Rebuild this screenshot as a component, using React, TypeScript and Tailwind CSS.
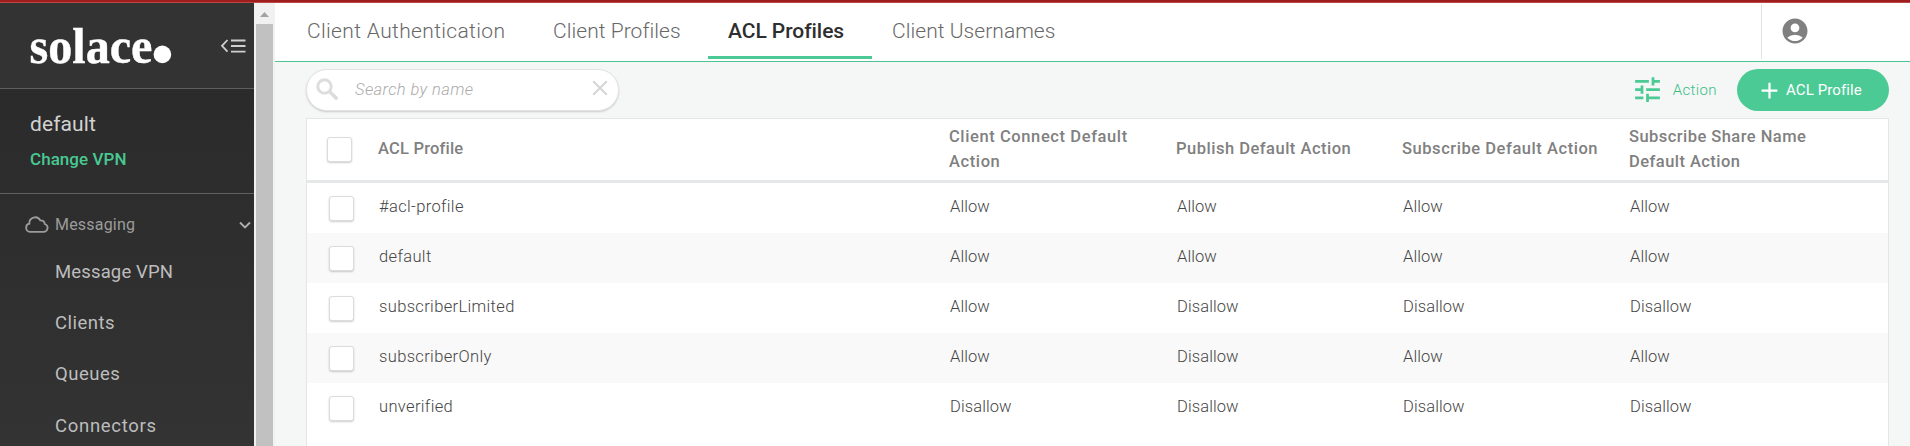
import { MdAccountCircle, MdAdd, MdClose, MdTune } from "react-icons/md";

const tabs = [
  { label: "Client Authentication", box: "w-[197px] tracking-[0.35px]", gap: "ml-[32px]" },
  { label: "Client Profiles", box: "w-[127px] tracking-[0.05px]", gap: "ml-[49px]" },
  { label: "ACL Profiles", box: "w-[164px] tracking-[-0.05px]", gap: "ml-[28px]", active: true },
  { label: "Client Usernames", box: "w-[165px] tracking-[0.05px]", gap: "ml-[20px]" },
];

const links = [
  { label: "Message VPN", cls: "tracking-[0.15px]" },
  { label: "Clients", cls: "tracking-[0.5px]" },
  { label: "Queues", cls: "tracking-[0.5px]" },
  { label: "Connectors", cls: "tracking-[0.7px]" },
];

const rows = [
  ["#acl-profile", "Allow", "Allow", "Allow", "Allow"],
  ["default", "Allow", "Allow", "Allow", "Allow"],
  ["subscriberLimited", "Allow", "Disallow", "Disallow", "Disallow"],
  ["subscriberOnly", "Allow", "Disallow", "Allow", "Allow"],
  ["unverified", "Disallow", "Disallow", "Disallow", "Disallow"],
];

const columns = "grid grid-cols-[71px_571px_227px_226px_227px_1fr]";

function Checkbox() {
  return <span className="block size-[25px] rounded-[3px] border border-[#dcdcdc] bg-white shadow-[0_1px_2px_rgba(0,0,0,0.2)]" />;
}

function Sidebar() {
  return (
    <aside className="flex w-[254px] shrink-0 flex-col overflow-hidden bg-linear-to-b from-[#292929] to-[#333333]">
      <div className="flex h-[86px] shrink-0 items-start border-b border-[#5e5e5e] bg-[#333333] pl-[29px]">
        <svg width="144" height="60" viewBox="0 -7 144 60" className="mt-[12px]">
          <text x="0.5" y="40.500" textLength="123" lengthAdjust="spacingAndGlyphs" fill="#fff" stroke="#fff" strokeWidth="0.4" fontFamily="'Liberation Serif', serif" fontWeight="700" fontSize="51">solace</text>
          <circle cx="133.4" cy="32.4" r="8.8" fill="#fff" />
        </svg>
        <svg width="26" height="16" viewBox="0 0 26 16" className="mt-[35px] ml-[47px]" fill="none" stroke="#cfcfcf" strokeWidth="1.8">
          <path d="M7.5 2L2 7.800l5.500 5.800M11 2.500h14.500M11 8h14.500M11 13.600h14.500" />
        </svg>
      </div>
      <div className="h-[105px] shrink-0 border-b border-[#606060] pt-[20px] pl-[30px]">
        <div className="text-[21px] leading-[30px] tracking-[0.1px] text-[#d2d2d2]">default</div>
        <div className="mt-[8px] text-[17px] leading-[24px] font-medium tracking-[0.05px] text-[#48c993]">Change VPN</div>
      </div>
      <div className="flex h-[61px] shrink-0 items-center pr-[3px] pl-[25px] text-[#9c9c9c]">
        <svg width="24" height="17" viewBox="0 0 24 17" fill="none" stroke="currentColor" strokeWidth="1.8">
          <path d="M5 15.800a4.100 4.100 0 0 1-.6-8.100 5.800 5.800 0 0 1 10.900-3.300 4.300 4.300 0 0 1 4.500 3.600 4 4 0 0 1-.9 7.800z" />
        </svg>
        <span className="ml-[6px] grow text-[16px] tracking-[0.2px]">Messaging</span>
        <svg width="12" height="8" viewBox="0 0 12 8" fill="none" stroke="#b0b0b0" strokeWidth="1.8"><path d="M1 1.500l5 5 5-5" /></svg>
      </div>
      {links.map((l) => (
        <div key={l.label} className="h-[51.2px] shrink-0 pl-[55px] text-[18.5px] leading-[34px] text-[#bdbdbd]">
          <span className={l.cls}>{l.label}</span>
        </div>
      ))}
    </aside>
  );
}

function Scrollbar() {
  return (
    <div className="flex w-[21px] shrink-0 flex-col bg-[#f1f1f1] pr-[2px] pl-[2px]">
      <svg width="17" height="21" viewBox="0 0 17 21" className="shrink-0"><path d="M4 14l4.500-5 4.500 5z" fill="#a3a3a3" /></svg>
      <div className="grow bg-[#c1c1c1]" />
    </div>
  );
}

export default function App() {
  return (
    <div className="flex h-[446px] w-[1910px] flex-col overflow-hidden bg-white font-[Roboto,sans-serif]">
      <div className="h-[3px] shrink-0 border-b border-[#b94a4a] bg-[#a01d1d]" />
      <div className="flex min-h-0 grow">
        <Sidebar />
        <Scrollbar />
        <main className="flex min-w-0 grow flex-col bg-[#f5f7f6]">
          <header className="flex h-[59px] shrink-0 border-b border-[#4fc493] bg-white">
            {tabs.map((t) => (
              <div key={t.label} className={`${t.gap} ${t.box} h-[56px] pt-[13px] text-[21px] leading-[30px] whitespace-nowrap ${t.active ? "border-b-3 border-[#4bca95] pl-[20px] font-medium text-[#2e2e2e]" : "font-light text-[#686868]"}`}>
                {t.label}
              </div>
            ))}
            <div className="mt-px ml-auto flex h-[55px] w-[149px] items-start border-l border-[#e2e2e4] pt-[12px] pl-[18px]">
              <MdAccountCircle size={30} color="#808080" />
            </div>
          </header>
          <div className="flex h-[56px] shrink-0 items-start pt-[7px] pr-[21px] pl-[31px]">
            <div className="flex h-[42px] w-[313px] items-center rounded-full border border-[#e4e4e4] bg-white pr-[5px] pb-px pl-[9px] shadow-[0_1px_2px_rgba(0,0,0,0.18)]">
              <svg width="23" height="23" viewBox="0 0 23 23" fill="none" stroke="#dddddd" strokeWidth="3">
                <circle cx="8.500" cy="8.500" r="6.700" />
                <path d="M13.500 13.500l7.800 7.800" strokeWidth="3.600" />
              </svg>
              <span className="mt-[2px] ml-[16px] grow text-[16.5px] font-light tracking-[0.4px] text-[#ababab] italic">Search by name</span>
              <MdClose size={26} color="#d6d6d6" className="mb-[3px]" />
            </div>
            <div className="ml-auto flex h-[42px] items-center text-[15px] font-light tracking-[0.4px] text-[#3cbd87]">
              <MdTune size={33} color="#4bca95" className="mb-[2px]" />
              <span className="ml-[9px]">Action</span>
            </div>
            <button className="ml-[20px] flex h-[42px] w-[152px] items-center rounded-full bg-[#4bca95] pl-[19px] text-[15px] text-white">
              <MdAdd size={27} />
              <span className="ml-[3px] tracking-[0.1px] whitespace-nowrap">ACL Profile</span>
            </button>
          </div>
          <section className="mr-[21px] ml-[31px] flex grow flex-col border border-b-0 border-[#e4e6e6] bg-white">
            <div className={`${columns} h-[64px] shrink-0 items-center border-b-3 border-[#e6e7e8] text-[16.5px] leading-[25px] font-medium text-[#808080]`}>
              <div className="pl-[20px]"><Checkbox /></div>
              <div className="pb-[3px] tracking-[0.2px]">ACL Profile</div>
              <div className="pb-[2px] tracking-[0.6px]">Client Connect Default<br />Action</div>
              <div className="pb-[3px] tracking-[0.5px]">Publish Default Action</div>
              <div className="pb-[3px] tracking-[0.55px]">Subscribe Default Action</div>
              <div className="pb-[2px] tracking-[0.45px]">Subscribe Share Name<br />Default Action</div>
            </div>
            {rows.map((r) => (
              <div key={r[0]} className={`${columns} h-[50px] shrink-0 items-center pl-px text-[16.5px] font-light text-[#454545] odd:bg-[#f9f9f9] even:bg-white`}>
                <div className="pl-[21px]"><Checkbox /></div>
                <div className="pb-[2px] tracking-[0.35px]">{r[0]}</div>
                {r.slice(1).map((c, i) => (
                  <div key={i} className="pb-[2px] tracking-[0.1px]">{c}</div>
                ))}
              </div>
            ))}
          </section>
        </main>
      </div>
    </div>
  );
}
